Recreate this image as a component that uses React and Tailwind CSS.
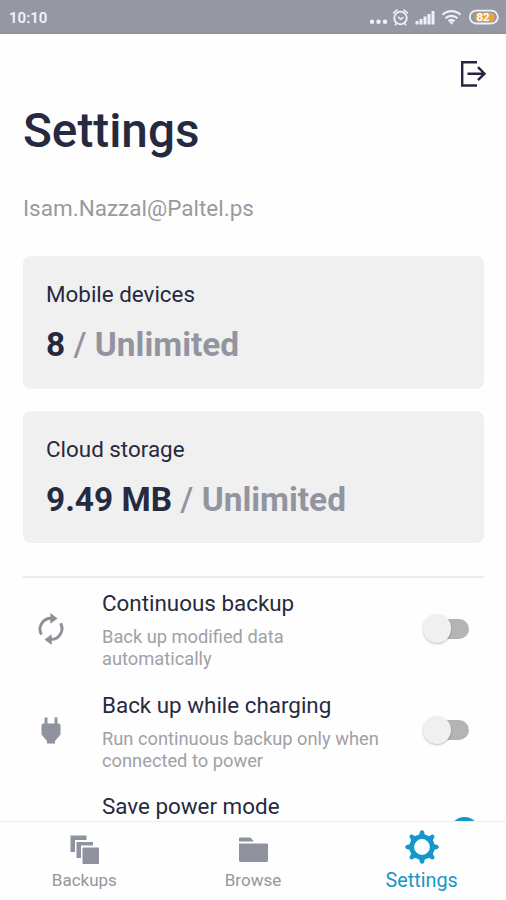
import React from 'react';

const usage = [
  { label: 'Mobile devices', value: '8', limit: 'Unlimited' },
  { label: 'Cloud storage', value: '9.49 MB', limit: 'Unlimited' }
];

const SyncIcon = () => (
  <svg className="w-8 h-8" viewBox="0 0 32 32" fill="none">
    <path d="M6.4 21.6A11 11 0 0 1 16.5 5.3M25.6 10.2A11 11 0 0 1 15.5 26.5" stroke="#8d9097" strokeWidth="2.9" />
    <path d="M15.3 0l7.2 5.4-7.2 5.4zM16.7 21.2l-7.2 5.4 7.2 5.4z" fill="#8d9097" />
  </svg>
);

const PlugIcon = () => (
  <svg className="w-8 h-8" viewBox="0 0 32 32" fill="#8f939e">
    <path d="M9.5 2.5h3V8.5h7V2.5h3V8.5h1c1.2 0 2 .8 2 2v9l-5.500 6.500v2.500h-8V26l-5.500-6.500v-9c0-1.200.8-2 2-2h1z" />
  </svg>
);

const BackupsIcon = () => (
  <svg className="w-[29px] h-[30px]" viewBox="0 0 29 30" fill="#8f939e">
    <path d="M0.500 0.500h16v4.500H5v12H0.500zM6.500 7h16.500v3.500H11v12.500H6.500z" />
    <rect x="12.500" y="12.500" width="16.500" height="16.500" rx="0.700" />
  </svg>
);

const BrowseIcon = () => (
  <svg className="w-[30px] h-[30px]" viewBox="0 0 30 30" fill="#8f939e">
    <path d="M1 6V3.500Q1 2.500 2 2.500H12.500L15.800 6.500H1zM1 8.500H29Q30 8.500 30 9.500V25.500Q30 27 28.500 27H2.500Q1 27 1 25.500z" />
  </svg>
);

const gearAngles = [0, 45, 90, 135, 180, 225, 270, 315];

const GearIcon = () => (
  <svg className="w-[34px] h-[34px]" viewBox="0 0 34 34" fill="#1597ca">
    <circle cx="17" cy="17" r="10.3" fill="none" stroke="#1597ca" strokeWidth="4.8" />
    {gearAngles.map((angle) => (
      <path key={angle} d="M13.700 6.500l1.300-4.900q2-2.800 4 0l1.300 4.900z" transform={`rotate(${angle} 17 17)`} />
    ))}
  </svg>
);

const settings = [
  {
    title: 'Continuous backup',
    description: 'Back up modified data automatically',
    icon: SyncIcon,
    enabled: false
  },
  {
    title: 'Back up while charging',
    description: 'Run continuous backup only when connected to power',
    icon: PlugIcon,
    enabled: false
  },
  {
    title: 'Save power mode',
    description: '',
    icon: null,
    enabled: true
  }
];

// The knob overhangs the track by 10px on its side
const Toggle = ({ enabled }) => (
  <div className="w-[56px] h-[30px] flex items-center px-[10px]">
    <div className={`w-9 h-5 rounded-full flex items-center ${enabled ? 'bg-[#8acbe5] justify-end' : 'bg-[#b4b4b4]'}`}>
      <div className={`w-[28.5px] h-[28.5px] shrink-0 rounded-full shadow-[0_1px_2px_rgba(0,0,0,0.25)] ${enabled ? 'bg-[#1597ca] -mr-[10px]' : 'bg-[#f0f0f0] -ml-[10px]'}`} />
    </div>
  </div>
);

const StatusBar = () => (
  <div className="h-[34px] shrink-0 bg-[#9598a3] border-b border-[#8d8f9b] flex items-center justify-between pl-[9px] pr-[7px]">
    <span className="text-[15px] font-semibold text-[#f2f3fa] leading-none pt-[3px]">10:10</span>
    <svg className="w-[130px] h-[24px]" viewBox="0 0 130 24" fill="none" stroke="#f0f1f7">
      <g fill="#f0f1f7" stroke="none">
        <circle cx="3" cy="16.700" r="2.200" />
        <circle cx="9.500" cy="16.700" r="2.200" />
        <circle cx="16" cy="16.700" r="2.200" />
        <rect x="46.500" y="16" width="3" height="3.500" />
        <rect x="50.500" y="14" width="3" height="5.500" />
        <rect x="54.500" y="11.500" width="3" height="8" />
        <rect x="58.500" y="9" width="3" height="10.500" />
        <rect x="62.500" y="6" width="3" height="13.500" />
      </g>
      {/* Alarm */}
      <circle cx="31.500" cy="13" r="6.300" strokeWidth="1.800" />
      <path d="M24 8.300l4.500-3.600M39 8.300l-4.500-3.600M27.500 18.300l-1.500 2M35.500 18.300l1.500 2M29 11.800l2.500 2.500 3-2" strokeWidth="1.500" />
      {/* Wifi */}
      <path d="M73.500 9.700a13 13 0 0 1 18 0M76.500 13.200a8.800 8.800 0 0 1 12 0M79.500 16.200a4.700 4.700 0 0 1 6 0" strokeWidth="2.200" />
      <path d="M80.500 17q2-1.600 4 0l-2 2.800z" fill="#f0f1f7" stroke="none" />
      {/* Battery */}
      <rect x="100.800" y="5.700" width="28" height="12.800" rx="6.400" strokeWidth="1.800" />
      <rect x="106" y="7.800" width="19.500" height="8.600" rx="4" fill="#eda33f" stroke="none" />
      <text x="114" y="16" textAnchor="middle" fontSize="11.500" fontWeight="700" fill="#fff" stroke="none">82</text>
    </svg>
  </div>
);

const App = () => {
  return (
    <div className="w-full max-w-[506px] h-screen flex flex-col overflow-hidden bg-[#fefefe] text-[#262a40] font-[Roboto,sans-serif]">
      <StatusBar />

      <div className="flex-1 min-h-0 overflow-hidden pl-[23px] pr-[22px]">
        {/* Log out */}
        <div className="flex justify-end pt-[26px] h-[67px]">
          <svg className="w-7 h-7 -mr-[2.5px]" viewBox="0 0 28 28" fill="none" stroke="#262543" strokeWidth="2.4">
            <path d="M18 2.200H3.200V25.500H18M8.500 13.700H26M19 7.200l6.500 6.500-6.500 6.500" />
          </svg>
        </div>

        <h1 className="text-[47.7px] font-medium leading-[60px]">Settings</h1>
        <p className="mt-[31px] text-[22.5px] leading-8 text-[#9a9a9d]">Isam.Nazzal@Paltel.ps</p>

        <div className="mt-8 flex flex-col gap-[22px]">
          {usage.map((item) => (
            <div key={item.label} className="h-[132.5px] rounded-lg bg-[#f0f0f0] px-[23px] pt-[22px]">
              <div className="text-[22.4px] leading-8">{item.label}</div>
              <div className="mt-[15px] text-[33.4px] leading-10 font-bold">
                {item.value} <span className="text-[#92959f]"><span className="font-medium">/</span> {item.limit}</span>
              </div>
            </div>
          ))}
        </div>

        <div className="mt-[33px] border-t-2 border-[#ebebec]">
          {settings.map((item) => (
            <div key={item.title} className="h-[101.5px] flex">
              <div className="w-[79px] pl-3 pt-[35px] shrink-0">{item.icon && <item.icon />}</div>
              <div className="w-[290px] pt-[9px]">
                <div className="text-[22.4px] leading-8">{item.title}</div>
                <div className="mt-[7px] text-[18.3px] leading-[22px] text-[#a0a1a5]">{item.description}</div>
              </div>
              <div className="ml-auto pt-[35.5px] pr-[5.5px]">
                <Toggle enabled={item.enabled} />
              </div>
            </div>
          ))}
        </div>
      </div>

      {/* Bottom navigation */}
      <nav className="h-[79px] shrink-0 border-t border-[#ededee] bg-[#fefefe] grid grid-cols-3 text-[17px] leading-5 text-[#94969c]">
        <div className="flex flex-col items-center pt-[13px]">
          <BackupsIcon />
          <span className="mt-[5px]">Backups</span>
        </div>
        <div className="flex flex-col items-center pt-[13px]">
          <BrowseIcon />
          <span className="mt-[5px]">Browse</span>
        </div>
        <div className="flex flex-col items-center pt-2 text-[#1597ca]">
          <GearIcon />
          <span className="mt-[7px] text-[19.8px]">Settings</span>
        </div>
      </nav>
    </div>
  );
};

export default App;
